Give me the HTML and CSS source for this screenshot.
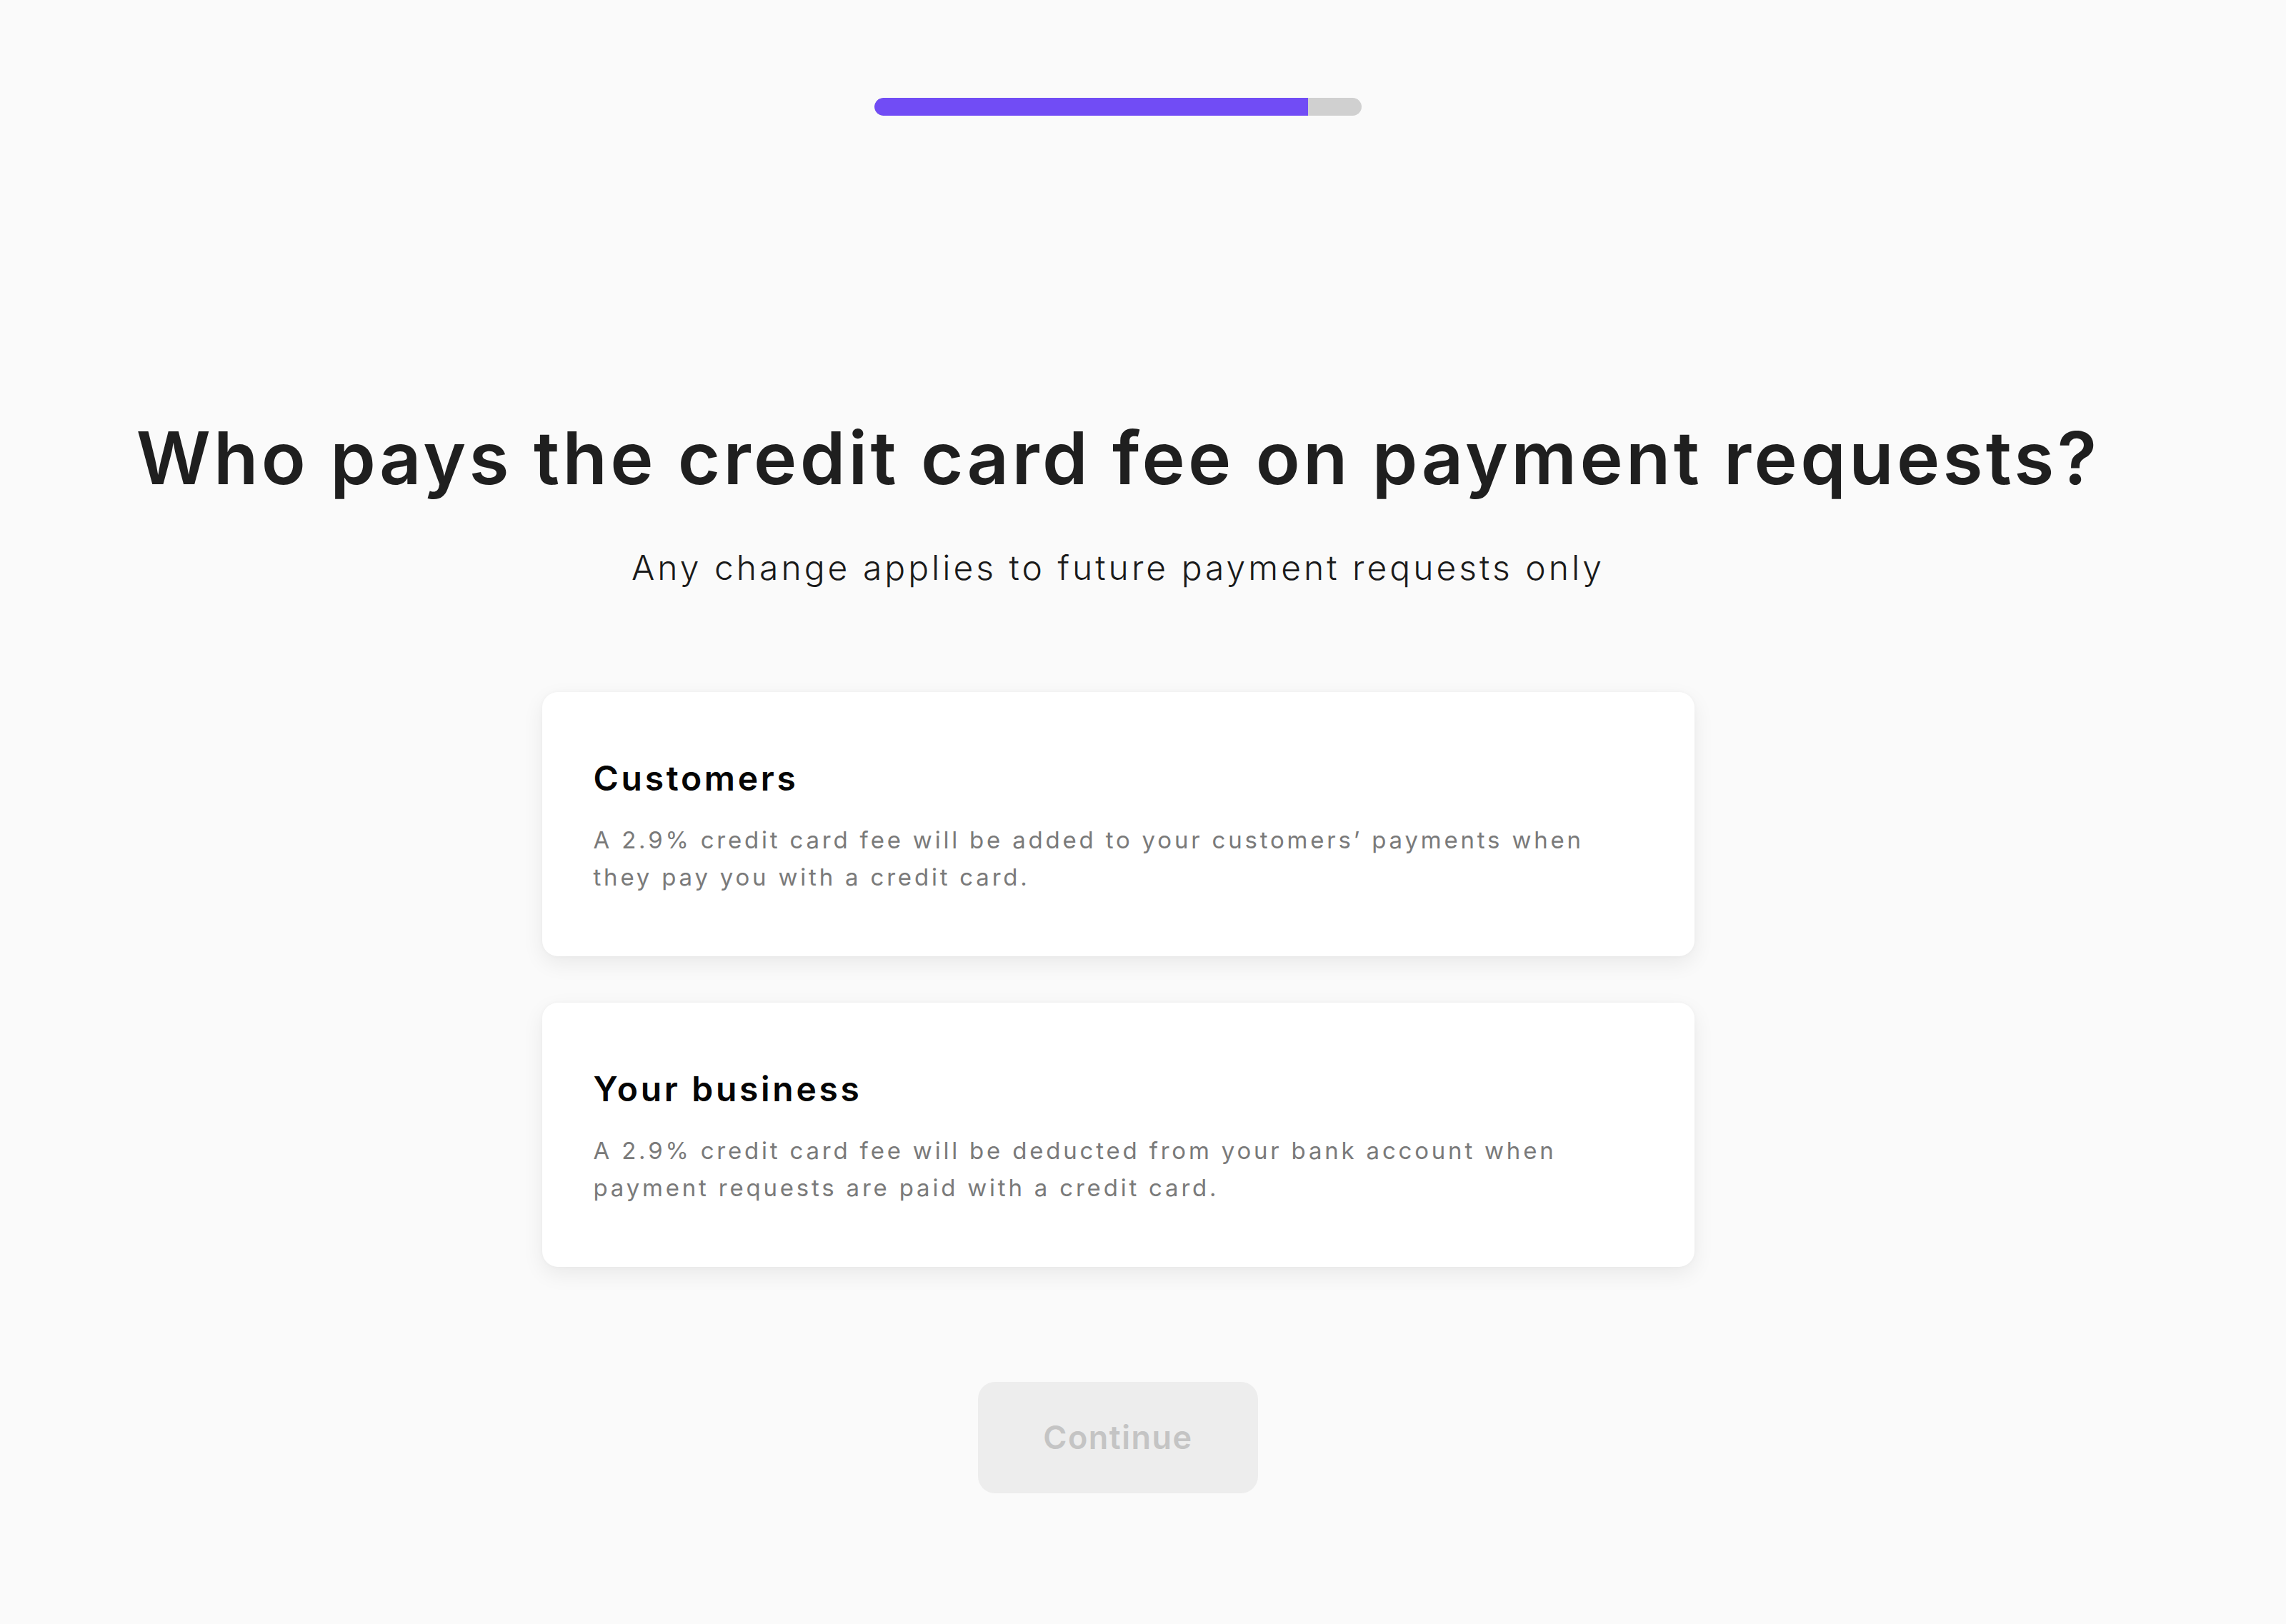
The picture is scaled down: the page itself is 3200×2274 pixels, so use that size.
FILE: index.html
```html
<!DOCTYPE html>
<html lang="en">
<head>
<meta charset="utf-8">
<title>Credit card fee</title>
<link rel="stylesheet" href="styles.css">
</head>
<body>
<main class="page">
  <div class="progress"><div class="progress-fill" style="width: 89%"></div></div>
  <h1 class="title">Who pays the credit card fee on payment requests?</h1>
  <p class="subtitle">Any change applies to future payment requests only</p>
  <div class="options">
    <div class="card">
      <h2 class="card-title">Customers</h2>
      <p class="card-text">A 2.9% credit card fee will be added to your customers’ payments when they pay you with a credit card.</p>
    </div>
    <div class="card">
      <h2 class="card-title">Your business</h2>
      <p class="card-text">A 2.9% credit card fee will be deducted from your bank account when payment requests are paid with a credit card.</p>
    </div>
  </div>
  <button class="continue" type="button">Continue</button>
</main>
</body>
</html>
```
FILE: styles.css
```css
html, body {
  margin: 0;
  padding: 0;
  background: #fafafa;
}
body {
  font-family: Inter, "Open Sans", sans-serif;
  color: #1f1f1f;
}
.page {
  width: 3130px;
  display: flex;
  flex-direction: column;
  align-items: center;
  padding-top: 137px;
  padding-bottom: 180px;
}
.progress {
  width: 682px;
  height: 25px;
  border-radius: 13px;
  background: #d0d0d0;
  overflow: hidden;
  display: flex;
}
.progress-fill {
  height: 100%;
  background: #714cf5;
  border-radius: 13px 0 0 13px;
}
.title {
  margin: 418px 0 0;
  font-size: 102px;
  line-height: 1.2;
  font-weight: 600;
  letter-spacing: 4.3px;
  color: #1f1f1f;
  white-space: nowrap;
}
.subtitle {
  margin: 64px 0 0;
  font-size: 48px;
  line-height: 1.2;
  font-weight: 300;
  letter-spacing: 4px;
  color: #1a1a1a;
  white-space: nowrap;
}
.options {
  margin-top: 145px;
  display: flex;
  flex-direction: column;
  gap: 65px;
}
.card {
  box-sizing: border-box;
  width: 1613px;
  height: 370px;
  padding: 92px 72px 0;
  background: #ffffff;
  border-radius: 22px;
  box-shadow: 0 10px 30px rgba(0, 0, 0, 0.07), 0 0 6px rgba(0, 0, 0, 0.03);
}
.card-title {
  margin: 0;
  font-size: 48px;
  line-height: 1.2;
  font-weight: 600;
  letter-spacing: 3.7px;
  color: #050505;
}
.card-text {
  margin: 31px 0 0;
  font-size: 33px;
  line-height: 52px;
  font-weight: 400;
  letter-spacing: 3.8px;
  color: #7a7a7a;
  max-width: 1440px;
}
.continue {
  margin-top: 161px;
  width: 392px;
  height: 156px;
  border: none;
  border-radius: 24px;
  background: #ededed;
  color: #c4c4c4;
  font-family: Inter, "Liberation Sans", sans-serif;
  font-size: 45px;
  font-weight: 600;
  letter-spacing: 1.5px;
  padding: 0;
}
```
